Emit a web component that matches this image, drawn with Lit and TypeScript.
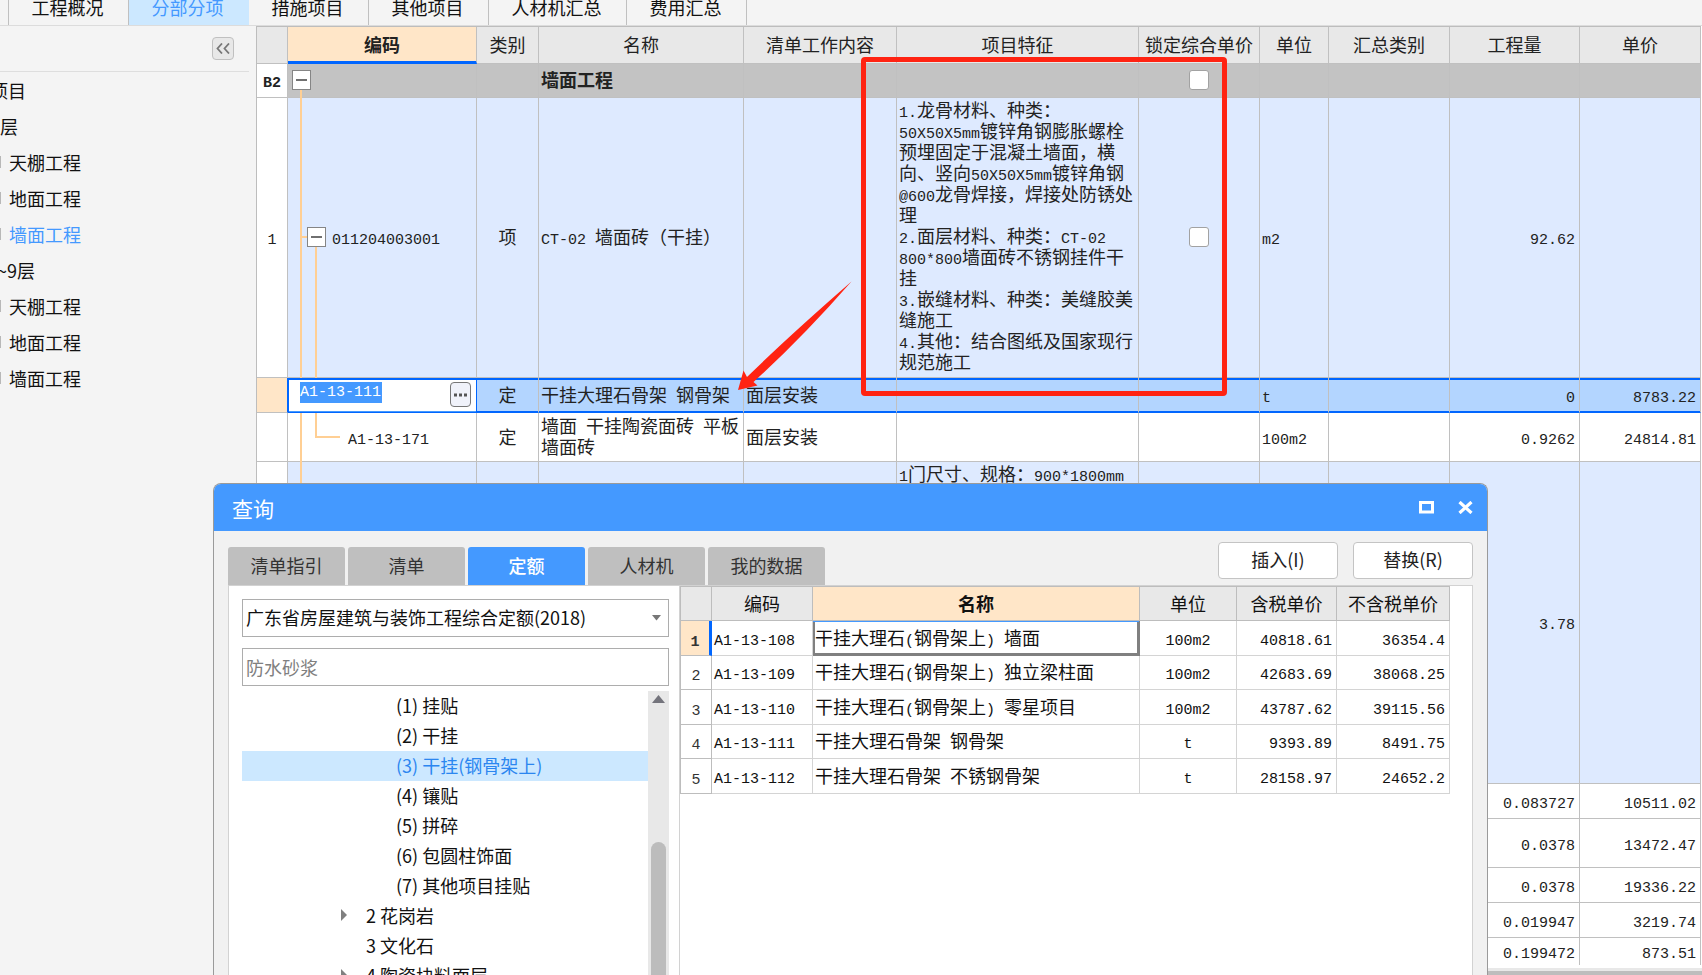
import { LitElement, html, css, svg, nothing } from "lit";
import { customElement } from "lit/decorators.js";
import { classMap } from "lit/directives/class-map.js";

// Splits a string so that half-width characters get the monospaced face.
const mixed = (text: string) =>
  text
    .split(/([\x21-\x7e](?:[\x20-\x7e]*[\x21-\x7e])?|[\x20])/)
    .filter((part) => part !== "")
    .map((part) => (/^[\x20-\x7e]+$/.test(part) ? html`<span class="mono">${part}</span>` : part));

const cellStyles = css`
  :host {
    font-family: "Noto Sans CJK SC", sans-serif;
    font-size: 18px;
    line-height: 21px;
    color: #222;
    text-spacing-trim: space-all;
    text-autospace: no-autospace;
  }
  * {
    box-sizing: border-box;
  }
  button,
  input,
  select {
    font: inherit;
    color: inherit;
    margin: 0;
  }
  .mono {
    font-family: "Liberation Mono", monospace;
    font-size: 15px;
    line-height: 0;
    white-space: pre-wrap;
  }
  table {
    border-collapse: separate;
    border-spacing: 0;
    table-layout: fixed;
  }
  th {
    font-weight: 400;
    background: #e8e8e8;
    padding: 0 0 2px;
    white-space: nowrap;
  }
  th.current {
    font-weight: 700;
    background: #ffe6c8;
  }
  td {
    padding: 0 2px 2px;
  }
  .center {
    text-align: center;
  }
  td.right {
    text-align: right;
    padding-right: 4px;
  }
`;

interface BillRow {
  no: string;
  kind: string;
  code: string;
  cat: string;
  name: string;
  work: string;
  feature: string;
  lock: boolean;
  unit: string;
  qty: string;
  price: string;
}

const row = (kind: string, data: Partial<BillRow> = {}): BillRow => ({
  no: "", code: "", cat: "", name: "", work: "", feature: "", lock: false, unit: "", qty: "", price: "",
  ...data,
  kind,
});

const BILL: BillRow[] = [
  row("section", { no: "B2", name: "墙面工程", lock: true }),
  row("item first", {
    no: "1",
    code: "011204003001",
    cat: "项",
    name: "CT-02 墙面砖（干挂）",
    feature:
      "1.龙骨材料、种类：\n50X50X5mm镀锌角钢膨胀螺栓预埋固定于混凝土墙面，横向、竖向50X50X5mm镀锌角钢@600龙骨焊接，焊接处防锈处理\n2.面层材料、种类：CT-02\n800*800墙面砖不锈钢挂件干挂\n3.嵌缝材料、种类：美缝胶美缝施工\n4.其他：结合图纸及国家现行规范施工",
    lock: true,
    unit: "m2",
    qty: "92.62",
  }),
  row("active", { code: "A1-13-111", cat: "定", name: "干挂大理石骨架 钢骨架", work: "面层安装", unit: "t", qty: "0", price: "8783.22" }),
  row("quota", { code: "A1-13-171", cat: "定", name: "墙面 干挂陶瓷面砖 平板墙面砖", work: "面层安装", unit: "100m2", qty: "0.9262", price: "24814.81" }),
  row("item second", { feature: "1门尺寸、规格：900*1800mm", qty: "3.78" }),
  row("short", { qty: "0.083727", price: "10511.02" }),
  row("tall", { qty: "0.0378", price: "13472.47" }),
  row("short", { qty: "0.0378", price: "19336.22" }),
  row("short", { qty: "0.019947", price: "3219.74" }),
  row("last", { qty: "0.199472", price: "873.51" }),
];

@customElement("bill-grid")
class BillGrid extends LitElement {
  static styles = [
    cellStyles,
    css`
      :host {
        display: block;
        background: #fff;
      }
      table {
        width: 100%;
        border-top: 1px solid #bdbdbd;
        border-left: 1px solid #bdbdbd;
      }
      .c-no { width: 31px; }
      .c-code { width: 189px; }
      .c-cat { width: 62px; }
      .c-name { width: 205px; }
      .c-work { width: 153px; }
      .c-feature { width: 242px; }
      .c-lock { width: 121px; }
      .c-unit { width: 69px; }
      .c-sum { width: 121px; }
      .c-qty { width: 130px; }
      th,
      td {
        border-right: 1px solid #c0c0c0;
        border-bottom: 1px solid #c0c0c0;
      }
      th { height: 37px; }
      th.current { border-bottom: 3px solid #0066ff; padding: 0; }
      .section td { height: 34px; background: #c3c3c3; font-weight: 700; }
      .first td { height: 280px; }
      .active td { height: 35px; }
      .quota td, .tall td { height: 49px; }
      .second td { height: 322px; }
      .short td { height: 35px; }
      .last td { height: 27px; border-bottom: 0; }
      .item td { background: #deeaff; }
      tr td.no { background: #fff; text-align: center; padding: 0 0 2px; }
      td.feature { white-space: pre-line; padding: 1px 2px 0; vertical-align: top; }
      td.code { position: relative; padding-left: 0; padding-right: 0; }
      .first td.code { padding-left: 44px; }
      .quota td.code { padding-left: 60px; }
      .active td {
        background: #b3d5ff;
        border-bottom-color: #0066ff;
        box-shadow: inset 0 2px #0066ff, inset 0 -1px #0066ff;
      }
      .active td.no { background: #ffe6c8; box-shadow: none; border-bottom-color: #c0c0c0; border-right-color: #0066ff; }
      .active td.code {
        background: #fff;
        border-right-color: #0066ff;
        box-shadow: inset 1px 2px #0066ff, inset 0 -1px #4499ff;
      }
      .editor {
        display: flex;
        align-items: center;
        justify-content: space-between;
        padding: 1px 5px 0 12px;
      }
      .editor input {
        width: 82px;
        height: 21px;
        margin-bottom: 4px;
        padding: 0;
        border: 0;
        outline: 0;
        background: #4499ff;
        color: #fff;
        font-family: "Liberation Mono", monospace;
        font-size: 15px;
      }
      .more {
        width: 21px;
        height: 25px;
        padding: 0;
        display: grid;
        place-items: center;
        border: 1px solid #777;
        border-radius: 4px;
        background: #f0f2fa;
      }
      .toggle {
        position: absolute;
        left: 4px;
        top: 6px;
        width: 19px;
        height: 20px;
        padding: 0;
        display: grid;
        place-items: center;
        background: #fff;
        border: 1px solid #858585;
        z-index: 1;
      }
      .first .toggle { left: 19px; top: 129px; }
      .guide { position: absolute; background: #ffcf94; }
      .trunk { left: 12px; top: 0; bottom: -1px; width: 2px; }
      .section .trunk { top: 26px; }
      .branch { left: 27px; width: 2px; }
      .first .branch { top: 149px; bottom: -1px; }
      .quota .branch { top: 0; height: 25px; }
      .twig { height: 2px; }
      .first .twig { left: 14px; width: 5px; top: 138px; }
      .quota .twig { left: 27px; width: 25px; top: 23px; }
      .check {
        appearance: none;
        display: block;
        width: 20px;
        height: 20px;
        margin: 0 auto;
        background: #fff;
        border: 1px solid #a2a2a2;
        border-radius: 3px;
      }
    `,
  ];

  private codeCell(r: BillRow) {
    if (r.kind === "active") {
      return html`<div class="editor">
        <input aria-label="编码" .value=${r.code} />
        <button class="more" aria-label="选择">
          <svg width="17" height="4" viewBox="0 0 17 4">
            <path d="M2 .5h3v3h-3zM7 .5h3v3h-3zM12 .5h3v3h-3z" fill="#555" />
          </svg>
        </button>
      </div>`;
    }
    const first = r.kind === "item first";
    const section = r.kind === "section";
    const quota = r.kind === "quota";
    const tree = first || section || quota || r.kind === "item second";
    return html`${tree ? html`<i class="guide trunk"></i>` : nothing}
      ${first || quota ? html`<i class="guide branch"></i><i class="guide twig"></i>` : nothing}
      ${first || section
        ? html`<button class="toggle" aria-label="折叠">
            <svg width="11" height="2" viewBox="0 0 11 2"><path d="M0 1h11" stroke="#333" stroke-width="1.4" /></svg>
          </button>`
        : nothing}
      ${mixed(r.code)}`;
  }

  render() {
    const heads = ["", "编码", "类别", "名称", "清单工作内容", "项目特征", "锁定综合单价", "单位", "汇总类别", "工程量", "单价"];
    const cols = ["no", "code", "cat", "name", "work", "feature", "lock", "unit", "sum", "qty", "price"];
    return html`<table>
      <colgroup>${cols.map((c) => html`<col class="c-${c}" />`)}</colgroup>
      <thead>
        <tr>${heads.map((h) => html`<th class=${classMap({ current: h === "编码" })}>${h}</th>`)}</tr>
      </thead>
      <tbody>
        ${BILL.map(
          (r) => html`<tr class=${r.kind}>
            <td class="no">${mixed(r.no)}</td>
            <td class="code">${this.codeCell(r)}</td>
            <td class="center">${r.cat}</td>
            <td>${mixed(r.name)}</td>
            <td>${r.work}</td>
            <td class="feature">${mixed(r.feature)}</td>
            <td>${r.lock ? html`<input class="check" type="checkbox" aria-label="锁定综合单价" />` : nothing}</td>
            <td>${mixed(r.unit)}</td>
            <td></td>
            <td class="right">${mixed(r.qty)}</td>
            <td class="right">${mixed(r.price)}</td>
          </tr>`
        )}
      </tbody>
    </table>`;
  }
}

const RESULTS = [
  ["A1-13-108", "干挂大理石(钢骨架上) 墙面", "100m2", "40818.61", "36354.4"],
  ["A1-13-109", "干挂大理石(钢骨架上) 独立梁柱面", "100m2", "42683.69", "38068.25"],
  ["A1-13-110", "干挂大理石(钢骨架上) 零星项目", "100m2", "43787.62", "39115.56"],
  ["A1-13-111", "干挂大理石骨架 钢骨架", "t", "9393.89", "8491.75"],
  ["A1-13-112", "干挂大理石骨架 不锈钢骨架", "t", "28158.97", "24652.2"],
];

const CHAPTERS = [
  { text: "(1) 挂贴", leaf: true, open: false },
  { text: "(2) 干挂", leaf: true, open: false },
  { text: "(3) 干挂(钢骨架上)", leaf: true, open: false },
  { text: "(4) 镶贴", leaf: true, open: false },
  { text: "(5) 拼碎", leaf: true, open: false },
  { text: "(6) 包圆柱饰面", leaf: true, open: false },
  { text: "(7) 其他项目挂贴", leaf: true, open: false },
  { text: "2 花岗岩", leaf: false, open: true },
  { text: "3 文化石", leaf: false, open: false },
  { text: "4 陶瓷块料面层", leaf: false, open: true },
];

@customElement("query-dialog")
class QueryDialog extends LitElement {
  static styles = [
    cellStyles,
    css`
      :host {
        display: flex;
        flex-direction: column;
        background: #f1f1f1;
        border: 1px solid #9a9a9a;
        border-bottom: 0;
        border-radius: 8px 8px 0 0;
        overflow: hidden;
      }
      .title {
        flex: none;
        display: flex;
        align-items: center;
        height: 47px;
        padding: 0 14px 0 18px;
        background: #4499ff;
        color: #fff;
        font-size: 21px;
      }
      .title h2 { flex: 1; margin: 0; font-size: 21px; font-weight: 400; padding-top: 2px; }
      .title button { border: 0; background: none; padding: 0 0 1px; margin-left: 24px; display: flex; }
      .bar { flex: none; display: flex; align-items: flex-end; height: 54px; padding: 0 14px; }
      .tabs { flex: 1; display: flex; gap: 3px; }
      .tabs button {
        width: 117px;
        height: 38px;
        padding: 0 0 2px;
        border: 0;
        border-radius: 3px 3px 0 0;
        background: #bfbfbf;
        color: #333;
      }
      .tabs .on { background: #4499ff; color: #fff; font-weight: 500; }
      .actions { display: flex; gap: 15px; padding-bottom: 6px; }
      .actions button {
        width: 120px;
        height: 37px;
        padding: 0 0 3px;
        background: #fff;
        border: 1px solid #c4c4c4;
        border-radius: 4px;
      }
      .panel {
        flex: 1;
        min-height: 0;
        margin: 0 14px;
        display: flex;
        background: #fff;
        border: 1px solid #d2d2d2;
        border-bottom: 0;
      }
      .left { flex: none; width: 451px; padding: 13px 10px 0 13px; display: flex; flex-direction: column; border-right: 1px solid #d2d2d2; }
      .pick { flex: none; position: relative; margin-bottom: 11px; }
      .pick svg { position: absolute; right: 8px; top: 16px; pointer-events: none; }
      .field {
        display: block;
        width: 100%;
        height: 38px;
        padding: 0 4px 1px 3px;
        appearance: none;
        border: 1px solid #adadad;
        border-radius: 0;
        background: #fff;
        outline: 0;
        color: #111;
      }
      input.field { flex: none; margin-bottom: 5px; }
      input.field::placeholder { color: #808080; opacity: 1; }
      .tree { flex: 1; min-height: 0; display: flex; overflow: hidden; }
      ul { flex: 1; margin: 0; padding: 0; list-style: none; color: #111; }
      li { height: 30px; line-height: 28px; display: flex; align-items: center; padding: 0 0 2px 98px; white-space: pre; }
      li.leaf { padding-left: 154px; }
      li.on { background: #cce8ff; color: #2b86f0; }
      li svg { width: 8px; height: 12px; margin-right: 18px; }
      .scroll { flex: none; width: 21px; background: #e8e8e8; display: flex; flex-direction: column; align-items: center; }
      .scroll svg { margin-top: 4px; }
      .thumb { flex: 1; width: 15px; margin-top: 139px; border-radius: 8px 8px 0 0; background: #bcbcbc; }
      table { border-left: 1px solid #bdbdbd; border-top: 1px solid #bdbdbd; width: 770px; }
      .c0 { width: 31px; }
      .c1 { width: 101px; }
      .c2 { width: 327px; }
      .c3 { width: 97px; }
      .c4 { width: 100px; }
      th { height: 34px; color: #111; padding: 0; border-right: 1px solid #bdbdbd; border-bottom: 1px solid #bdbdbd; }
      td { height: 35px; color: #111; border-right: 1px solid #d4d4d4; border-bottom: 1px solid #d4d4d4; }
      tr:nth-child(2n) td { height: 34px; }
      td.no { text-align: center; padding: 0; border-color: #bdbdbd; color: #333; }
      .picked td.no { background: #ffe6c8; font-weight: 700; border-right: 3px solid #0066ff; }
      .picked td.name { box-shadow: inset 0 1px #4499ff, inset 2px 0 #808080, inset -2px -2px #808080; border-color: #808080; }
    `,
  ];

  render() {
    return html`
      <div class="title">
        <h2>查询</h2>
        <button aria-label="最大化">
          <svg width="15" height="13" viewBox="0 0 15 13"><rect x="1.5" y="1.5" width="12" height="9.5" fill="none" stroke="#fff" stroke-width="3" /></svg>
        </button>
        <button aria-label="关闭">
          <svg width="15" height="13" viewBox="0 0 15 13"><path d="M1.5 1l12 11M13.5 1l-12 11" stroke="#fff" stroke-width="3.2" /></svg>
        </button>
      </div>
      <div class="bar">
        <div class="tabs" role="tablist">
          ${["清单指引", "清单", "定额", "人材机", "我的数据"].map(
            (t) => html`<button role="tab" class=${classMap({ on: t === "定额" })}>${t}</button>`
          )}
        </div>
        <div class="actions"><button>插入(I)</button><button>替换(R)</button></div>
      </div>
      <div class="panel">
        <div class="left">
          <div class="pick">
            <select class="field" aria-label="定额库"><option>广东省房屋建筑与装饰工程综合定额(2018)</option></select>
            <svg width="9" height="6" viewBox="0 0 9 6"><path d="M0 0h9L4.500 5.500z" fill="#777" /></svg>
          </div>
          <input class="field" aria-label="搜索" placeholder="防水砂浆" />
          <div class="tree">
            <ul>
              ${CHAPTERS.map(
                (c) => html`<li class=${classMap({ leaf: c.leaf, on: c.text.startsWith("(3)") })}>${c.leaf
                  ? nothing
                  : html`<svg viewBox="0 0 8 12">${c.open ? svg`<path d="M1 0l6 6-6 6z" fill="#808080" />` : nothing}</svg>`}<span>${c.text}</span></li>`
              )}
            </ul>
            <div class="scroll">
              <svg width="13" height="8" viewBox="0 0 13 8"><path d="M0 8L6.500 0 13 8z" fill="#74747c" /></svg>
              <div class="thumb"></div>
            </div>
          </div>
        </div>
        <div>
          <table>
            <colgroup>${[0, 1, 2, 3, 4, 5].map((n) => html`<col class="c${n}" />`)}</colgroup>
            <thead>
              <tr>
                ${["", "编码", "名称", "单位", "含税单价", "不含税单价"].map(
                  (h) => html`<th class=${classMap({ current: h === "名称" })}>${h}</th>`
                )}
              </tr>
            </thead>
            <tbody>
              ${RESULTS.map(
                ([code, name, unit, gross, net], i) => html`<tr class=${classMap({ picked: i === 0 })}>
                  <td class="no">${mixed(String(i + 1))}</td>
                  <td>${mixed(code)}</td>
                  <td class="name">${mixed(name)}</td>
                  <td class="center">${mixed(unit)}</td>
                  <td class="right">${mixed(gross)}</td>
                  <td class="right">${mixed(net)}</td>
                </tr>`
              )}
            </tbody>
          </table>
        </div>
      </div>
    `;
  }
}

@customElement("app-root")
class AppRoot extends LitElement {
  static styles = css`
    :host {
      display: flex;
      flex-direction: column;
      position: relative;
      height: 100vh;
      overflow: hidden;
      background: #f4f4f4;
      font-family: "Noto Sans CJK SC", sans-serif;
      font-size: 18px;
      line-height: 18px;
      color: #111;
    }
    * { box-sizing: border-box; }
    .tabs {
      flex: none;
      display: flex;
      height: 26px;
      padding-left: 8px;
      border-bottom: 1px solid #dcdcdc;
    }
    .tabs a {
      width: 120px;
      display: flex;
      align-items: flex-end;
      justify-content: center;
      padding: 0 2px 9px 0;
      border-right: 1px solid #c0c0c0;
      color: inherit;
      text-decoration: none;
    }
    .tabs a:first-child { border-left: 1px solid #c0c0c0; width: 121px; }
    .tabs .wide { width: 138px; }
    .tabs .on { background: #cce8ff; color: #4499ff; border-color: #cce8ff; }
    .body { flex: 1; min-height: 0; display: flex; }
    aside { flex: none; width: 256px; overflow: hidden; }
    .head {
      height: 46px;
      margin-right: 7px;
      border-bottom: 1px solid #dedede;
      display: flex;
      justify-content: flex-end;
      align-items: flex-start;
      padding: 11px 15px 0 0;
    }
    .head button {
      width: 22px;
      height: 23px;
      padding: 0;
      display: grid;
      place-items: center;
      border: 1px solid #c0c0c0;
      border-radius: 4px;
      background: #e8e8e8;
    }
    nav a {
      display: flex;
      align-items: center;
      height: 36px;
      color: inherit;
      text-decoration: none;
      white-space: pre;
    }
    .root { margin-left: -10px; }
    .range { margin-left: -3px; }
    .leaf::before { content: ""; width: 1px; height: 12px; margin-right: 8px; background: #b8b8b8; }
    nav .on { color: #4499ff; }
    main { flex: 1; min-width: 0; display: flex; flex-direction: column; padding-right: 1px; background: #fff; }
    .hbar { flex: none; height: 9px; margin: 3px -1px 0 0; background: #bdbdbd; border-top: 3px solid #e8e8e8; }
    query-dialog { position: absolute; left: 213px; top: 483px; bottom: 0; width: 1275px; }
    .frame {
      position: absolute;
      left: 861px;
      top: 57px;
      width: 366px;
      height: 339px;
      border: 5px solid #ff2312;
      border-radius: 4px;
      pointer-events: none;
    }
    .arrow { position: absolute; left: 736px; top: 280px; pointer-events: none; }
  `;

  render() {
    return html`
      <div class="tabs">
        <a href="#">工程概况</a><a href="#" class="on">分部分项</a><a href="#">措施项目</a><a href="#">其他项目</a
        ><a href="#" class="wide">人材机汇总</a><a href="#">费用汇总</a>
      </div>
      <div class="body">
        <aside>
          <div class="head">
            <button aria-label="收起">
              <svg width="14" height="11" viewBox="0 0 14 11"><path d="M6 .5L1.500 5.500l4.500 5M13 .5L8.500 5.500l4.500 5" fill="none" stroke="#777" stroke-width="1.800" /></svg>
            </button>
          </div>
          <nav>
            <a href="#" class="root">项目</a>
            <a href="#">层</a>
            <a href="#" class="leaf">天棚工程</a>
            <a href="#" class="leaf">地面工程</a>
            <a href="#" class="leaf on">墙面工程</a>
            <a href="#" class="range">~9层</a>
            <a href="#" class="leaf">天棚工程</a>
            <a href="#" class="leaf">地面工程</a>
            <a href="#" class="leaf">墙面工程</a>
          </nav>
        </aside>
        <main>
          <bill-grid></bill-grid>
          <div class="hbar"></div>
        </main>
      </div>
      <query-dialog></query-dialog>
      <div class="frame"></div>
      <svg class="arrow" width="118" height="112" viewBox="736 280 118 112">
        <path d="M738 390L743.500 370.500l3.500 6.500Q790 335 851.500 281.500Q802 338 753.500 382l4 3.500z" fill="#ff2312" />
      </svg>
    `;
  }
}
